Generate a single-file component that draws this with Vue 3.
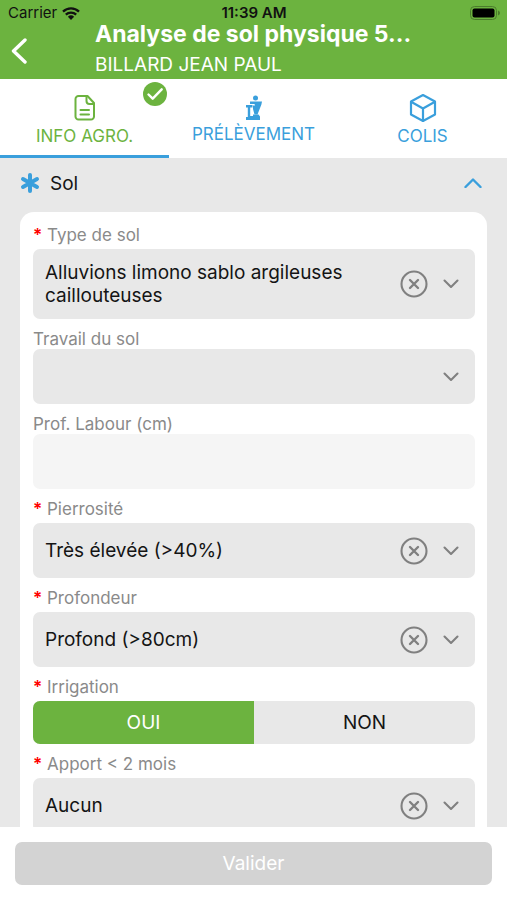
<script setup>
import { reactive, ref } from 'vue'

const open = ref(true)
const active = ref('info')
const tabs = [
  { id: 'info', label: 'INFO AGRO.', done: true },
  { id: 'sample', label: 'PRÉLÈVEMENT', done: false },
  { id: 'parcel', label: 'COLIS', done: false },
]

const fields = reactive([
  { id: 'type', label: 'Type de sol', kind: 'select', required: true, value: 'Alluvions limono sablo argileuses caillouteuses' },
  { id: 'travail', label: 'Travail du sol', kind: 'select', required: false, value: '' },
  { id: 'labour', label: 'Prof. Labour (cm)', kind: 'text', required: false, value: '' },
  { id: 'pierrosite', label: 'Pierrosité', kind: 'select', required: true, value: 'Très élevée (>40%)' },
  { id: 'profondeur', label: 'Profondeur', kind: 'select', required: true, value: 'Profond (>80cm)' },
  { id: 'irrigation', label: 'Irrigation', kind: 'choice', required: true, value: 'OUI' },
  { id: 'apport', label: 'Apport < 2 mois', kind: 'select', required: true, value: 'Aucun' },
])
const options = Object.fromEntries(fields.map((f) => [f.id, f.value ? ['', f.value] : ['']]))
</script>

<template>
  <div class="screen">
    <header class="top">
      <div class="status">
        <span class="carrier">
          Carrier
          <svg class="wifi" viewBox="0 0 18 13" aria-hidden="true">
            <path d="M1 4.6a11.6 11.6 0 0 1 16 0M3.8 7.6a7.6 7.6 0 0 1 10.4 0" fill="none" stroke="#111" stroke-width="2.3" />
            <path d="M9 13 5.9 9.8a4.5 4.5 0 0 1 6.2 0z" fill="#111" />
          </svg>
        </span>
        <span class="clock">11:39 AM</span>
        <svg class="battery" viewBox="0 0 30 14" aria-hidden="true">
          <rect x="0.5" y="0.5" width="26" height="13" rx="4" fill="none" stroke="#4b7c2c" />
          <rect x="2.5" y="2.5" width="22" height="9" rx="2" fill="#000" />
          <path d="M28 4.5v5q2-.8 2-2.5t-2-2.500z" fill="#4b7c2c" />
        </svg>
      </div>
      <div class="bar">
        <button class="back" type="button" aria-label="Retour">
          <svg viewBox="0 0 16 26" aria-hidden="true">
            <path d="M14 2 2.500 13 14 24" fill="none" stroke="#fff" stroke-width="3.400" stroke-linecap="round" stroke-linejoin="round" />
          </svg>
        </button>
        <div class="titles">
          <h1>Analyse de sol physique 5...</h1>
          <p>BILLARD JEAN PAUL</p>
        </div>
      </div>
    </header>

    <nav class="tabs">
      <button
        v-for="tab in tabs"
        :key="tab.id"
        type="button"
        class="tab"
        :class="[tab.id, { active: active === tab.id, done: tab.done }]"
        @click="active = tab.id"
      >
        <svg v-if="tab.id === 'info'" class="icon" viewBox="0 0 28 30" aria-hidden="true">
          <g fill="none" stroke="currentColor" stroke-width="2" stroke-linejoin="round" stroke-linecap="round">
            <path d="M7.500 3h9L23 10v13.500a3 3 0 0 1-3 3H7.500a3 3 0 0 1-3-3V6a3 3 0 0 1 3-3z" />
            <path d="M15.500 3.500V8a3 3 0 0 0 3 3H23M9.500 17h8.500M9.500 21.500h8.500" />
          </g>
        </svg>
        <svg v-else-if="tab.id === 'sample'" class="icon small" viewBox="0 0 18 26" aria-hidden="true">
          <g fill="currentColor">
            <circle cx="10.500" cy="3" r="2.500" />
            <path d="M5 6.500h12l-.6 3-3.900 10h-3l-1.500-5.500v-3.500h2l-.5-1.500H5z" />
            <path d="M1 10h6.500v2.500H5.200V21H8v-1.500h5.500L15 21.500V25H1v-3h1.800v-9.500H1z" />
          </g>
        </svg>
        <svg v-else class="icon" viewBox="0 0 28 30" aria-hidden="true">
          <g fill="none" stroke="currentColor" stroke-width="2.200" stroke-linejoin="round" stroke-linecap="round">
            <path d="M14 2 26 8.500v13L14 28 2 21.500v-13z" />
            <path d="M2.500 9 14 15.500 25.500 9M14 15.500V28" />
          </g>
        </svg>
        <span>{{ tab.label }}</span>
        <svg v-if="tab.done" class="badge" viewBox="0 0 24 24" aria-hidden="true">
          <circle cx="12" cy="12" r="12" fill="#6cb33f" />
          <path d="m5.500 12.500 4.200 4.200 9-9.400" fill="none" stroke="#fff" stroke-width="2.400" stroke-linecap="round" stroke-linejoin="round" />
        </svg>
      </button>
    </nav>

    <main class="content">
      <button class="section" type="button" :aria-expanded="open" @click="open = !open">
        <svg class="star" viewBox="0 0 20 20" aria-hidden="true">
          <path d="M10 2v16M3 6l14 8M17 6 3 14" stroke="#3a9fdc" stroke-width="4" stroke-linecap="round" />
        </svg>
        <span>Sol</span>
        <svg class="caret" :class="{ closed: !open }" viewBox="0 0 18 10" aria-hidden="true">
          <path d="m1.500 9 7.500-7.500L16.500 9" fill="none" stroke="#3a9fdc" stroke-width="2.400" stroke-linecap="round" stroke-linejoin="round" />
        </svg>
      </button>

      <form v-if="open" id="soil" class="card" @submit.prevent>
        <div v-for="f in fields" :key="f.id" class="field">
          <label :id="`${f.id}-label`" :for="f.kind === 'choice' ? `${f.id}-OUI` : f.id" :class="{ required: f.required }">
            <b v-if="f.required">*</b>{{ f.label }}
          </label>

          <div v-if="f.kind === 'select'" class="picker">
            <select :id="f.id" v-model="f.value">
              <option v-for="o in options[f.id]" :key="o" :value="o">{{ o }}</option>
            </select>
            <button v-if="f.value" class="clear" type="button" :aria-label="`Effacer ${f.label}`" @click="f.value = ''">
              <svg viewBox="0 0 28 28" aria-hidden="true">
                <circle cx="14" cy="14" r="12.500" fill="none" stroke="#808080" stroke-width="2.100" />
                <path d="m10 10 8 8M18 10l-8 8" stroke="#808080" stroke-width="2.400" stroke-linecap="round" />
              </svg>
            </button>
            <svg class="arrow" viewBox="0 0 16 10" aria-hidden="true">
              <path d="m1.500 1.500 6.500 6.500 6.500-6.500" fill="none" stroke="#808080" stroke-width="2.100" stroke-linecap="round" stroke-linejoin="round" />
            </svg>
          </div>

          <input v-else-if="f.kind === 'text'" :id="f.id" v-model="f.value" class="text" type="text" />

          <div v-else class="choice" role="radiogroup" :aria-labelledby="`${f.id}-label`">
            <label v-for="o in ['OUI', 'NON']" :key="o" :class="{ on: f.value === o }">
              <input :id="`${f.id}-${o}`" v-model="f.value" type="radio" :name="f.id" :value="o" />
              {{ o }}
            </label>
          </div>
        </div>
      </form>
    </main>

    <footer class="actions">
      <button type="submit" form="soil" disabled>Valider</button>
    </footer>
  </div>
</template>

<style>
body {
  margin: 0;
}
</style>

<style scoped>
* {
  box-sizing: border-box;
}
.screen {
  display: flex;
  flex-direction: column;
  height: 100vh;
  background: #fff;
  color: #141414;
  font-family: Inter, "Liberation Sans", sans-serif;
}
button,
select,
input {
  margin: 0;
  border: 0;
  color: inherit;
  font-family: inherit;
}
button {
  padding: 0;
  background: none;
}
svg {
  display: block;
}
.top {
  flex: none;
  background: #6cb33f;
  color: #fff;
}
.status {
  display: grid;
  grid-template-columns: 1fr auto 1fr;
  align-items: center;
  height: 20px;
  padding: 6px 7px 0 8px;
  color: #111;
  font-size: 15px;
  line-height: 14px;
}
.carrier {
  display: flex;
  align-items: center;
  gap: 5px;
}
.wifi {
  width: 18px;
  height: 13px;
}
.clock {
  font-weight: 600;
}
.battery {
  justify-self: end;
  width: 30px;
  height: 14px;
}
.bar {
  display: flex;
  align-items: center;
  height: 59px;
  padding: 3px 0 0 10px;
}
.back {
  flex: none;
  width: 85px;
}
.back svg {
  width: 18px;
  height: 26px;
}
.titles {
  min-width: 0;
  white-space: nowrap;
}
h1 {
  margin: 0;
  font-size: 23px;
  line-height: 28px;
  font-weight: 700;
}
p {
  margin: 0;
  font-size: 19px;
  line-height: 34px;
}
.tabs {
  flex: none;
  display: grid;
  grid-template-columns: repeat(3, 1fr);
  height: 79px;
}
.tab {
  position: relative;
  display: flex;
  flex-direction: column;
  align-items: center;
  justify-content: center;
  gap: 2px;
  padding-top: 5px;
  border-bottom: 3px solid transparent;
  color: #3a9fdc;
  font-size: 17px;
  line-height: 22px;
}
.tab.active {
  border-color: #3a9fdc;
}
.tab.done {
  color: #6cb33f;
}
.icon {
  width: 28px;
  height: 30px;
}
.icon.small {
  width: 18px;
  height: 26px;
}
.badge {
  position: absolute;
  top: 3px;
  right: 2px;
  width: 24px;
  height: 24px;
}
.content {
  flex: 1;
  min-height: 0;
  overflow-y: auto;
  scrollbar-width: none;
  padding: 0 20px 20px;
  background: #e8e8e8;
}
.section {
  display: flex;
  align-items: center;
  gap: 10px;
  width: 100%;
  height: 54px;
  padding: 0 5px 4px 0;
  font-size: 19px;
  text-align: left;
}
.section span {
  flex: 1;
}
.star {
  width: 20px;
  height: 20px;
}
.caret {
  width: 18px;
  height: 10px;
}
.caret.closed {
  transform: rotate(180deg);
}
.card {
  display: flex;
  flex-direction: column;
  gap: 10px;
  padding: 13px 12px 12px 13px;
  border-radius: 14px;
  background: #fff;
}
.field > label {
  display: block;
  height: 20px;
  color: #8a8a8a;
  font-size: 17px;
  line-height: 20px;
}
.field > label.required {
  height: 24px;
}
b {
  display: inline-block;
  width: 14px;
  color: #f00;
  font-weight: 600;
}
.picker {
  display: grid;
  grid-template-columns: 1fr 28px 16px;
  column-gap: 15px;
  align-items: center;
  padding-right: 16px;
  border-radius: 7px;
  background: #e8e8e8;
}
.picker select {
  grid-area: 1 / 1 / 2 / 4;
  width: 100%;
  height: auto;
  min-height: 55px;
  padding: 12px 86px 12px 12px;
  appearance: none;
  background: none;
  font-size: 19px;
  line-height: 23px;
  white-space: normal;
}
.clear {
  grid-area: 1 / 2;
}
.clear svg {
  width: 28px;
  height: 28px;
}
.arrow {
  grid-area: 1 / 3;
  width: 16px;
  height: 10px;
  pointer-events: none;
}
.text {
  display: block;
  width: 100%;
  height: 55px;
  padding: 0 12px;
  border-radius: 7px;
  background: #f5f5f5;
  font-size: 19px;
}
.choice {
  display: grid;
  grid-template-columns: 1fr 1fr;
  overflow: hidden;
  border-radius: 7px;
  background: #e8e8e8;
}
.choice label {
  position: relative;
  font-size: 19px;
  line-height: 43px;
  text-align: center;
}
.choice label.on {
  background: #6cb33f;
  color: #fff;
}
.choice input {
  position: absolute;
  inset: 0;
  opacity: 0;
}
.actions {
  flex: none;
  padding: 15px;
  background: #fff;
}
.actions button {
  width: 100%;
  height: 43px;
  border-radius: 7px;
  background: #d3d3d3;
  color: #fff;
  font-size: 19px;
}
</style>
